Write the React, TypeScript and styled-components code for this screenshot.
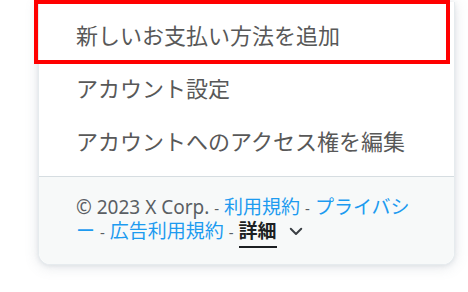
import React from "react";
import styled, { createGlobalStyle } from "styled-components";

const Global = createGlobalStyle`
  html, body { margin: 0; padding: 0; background: #ffffff; }
  body { font-family: "Noto Sans", "Noto Sans CJK JP", sans-serif; }
`;

const Page = styled.div`
  width: 468px;
  height: 292px;
  padding: 2px 0 0 38px;
  box-sizing: border-box;
`;

const Card = styled.div`
  position: relative;
  width: 417px;
  background: #ffffff;
  border: 1px solid #e6ebee;
  border-top: none;
  border-radius: 0 0 12px 12px;
  box-shadow: 0 2px 14px rgba(101, 119, 134, 0.18), 0 1px 4px rgba(101, 119, 134, 0.12);
  box-sizing: border-box;
`;

const Menu = styled.div`
  display: flex;
  flex-direction: column;
  padding: 5px 0 10px;
`;

const Item = styled.div`
  height: 53px;
  display: flex;
  align-items: center;
  padding-left: 37px;
  font-family: "Noto Sans CJK JP", sans-serif;
  font-size: 22px;
  color: #585858;
`;

const Highlight = styled.div`
  position: absolute;
  left: -5px;
  top: -2px;
  width: 416px;
  height: 64px;
  border: 4px solid #ff0000;
  box-sizing: border-box;
  pointer-events: none;
`;

const Footer = styled.div`
  background: #f7f9f9;
  border-top: 1px solid #d6dde1;
  border-radius: 0 0 12px 12px;
  padding: 19px 36px 20px 37px;
  font-family: "Noto Sans", "Noto Sans CJK JP", sans-serif;
  font-size: 19px;
  line-height: 23px;
  color: #5a5f64;
  line-break: loose;
`;

const Link = styled.span`
  color: #1d9bf0;
`;

const Sep = styled.span`
  color: #5a5f64;
  font-size: 15px;
`;

const More = styled.span`
  color: #1c1f22;
  font-weight: 600;
  border-bottom: 2px solid #1c1f22;
  padding-bottom: 2px;
`;

const Chevron = styled.svg`
  width: 18px;
  height: 18px;
  margin-left: 10px;
  vertical-align: -2px;
`;

export default function App() {
  return (
    <>
      <Global />
      <Page>
        <Card>
          <Highlight />
          <Menu>
            <Item>新しいお支払い方法を追加</Item>
            <Item>アカウント設定</Item>
            <Item>アカウントへのアクセス権を編集</Item>
          </Menu>
          <Footer>
            © 2023 X Corp. <Sep>-</Sep> <Link>利用規約</Link> <Sep>-</Sep>{" "}
            <Link>プライバシー</Link> <Sep>-</Sep> <Link>広告利用規約</Link>{" "}
            <Sep>-</Sep> <More>詳細</More>
            <Chevron viewBox="0 0 24 24" fill="none" stroke="#3a3f44" strokeWidth="2.6" strokeLinecap="round" strokeLinejoin="round">
              <path d="M5 9l7 7 7-7" />
            </Chevron>
          </Footer>
        </Card>
      </Page>
    </>
  );
}
